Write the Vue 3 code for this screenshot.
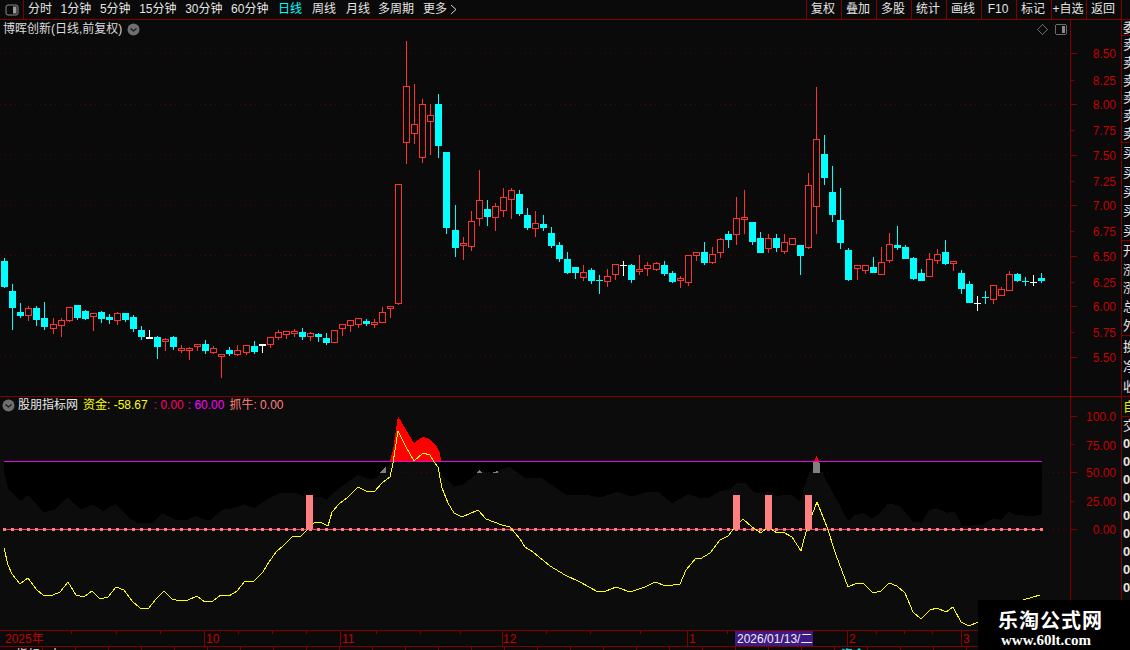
<script setup>
const raw = [
['c',258,261,286,287],['c',284,291,307,329],['c',303,312,315,317],['r',306,308,315,320],['c',306,308,319,325],
['c',302,318,326,329],['r',318,324,328,333],['r',318,320,325,336],['r',307,307,320,321],['c',305,305,317,319],
['c',310,311,318,319],['r',313,313,316,330],['c',311,312,318,322],['c',314,317,319,323],['r',312,313,320,324],
['c',313,313,319,321],['c',315,317,328,331],['c',326,330,336,339],['w',330,337,338,338],['c',336,337,346,358],
['r',338,339,341,350],['c',336,337,346,349],['r',345,348,350,352],['r',347,348,350,359],['r',344,344,346,350],
['c',340,344,350,353],['r',346,348,352,353],['r',354,354,356,377],['c',347,350,353,355],['r',345,350,354,355],
['r',345,345,352,354],['c',341,346,351,353],['w',344,344,345,352],['r',337,337,344,347],['r',330,332,337,339],
['r',331,331,334,338],['r',329,331,333,336],['c',328,332,336,339],['r',332,333,336,340],['c',333,334,336,341],
['c',333,338,342,344],['r',330,330,342,342],['r',324,324,328,335],['r',320,320,325,331],['r',318,318,324,327],
['c',319,321,323,325],['r',319,322,324,327],['r',307,312,322,322],['r',306,306,308,317],['r',184,184,303,304],
['r',41,86,142,163],['r',84,124,133,143],['r',99,104,157,162],['r',104,115,121,154],['c',94,104,145,157],
['c',152,152,227,233],['c',205,230,247,256],['r',237,243,245,259],['r',211,221,246,250],['r',170,200,218,225],
['c',200,209,216,225],['r',203,206,217,230],['r',188,197,210,216],['r',188,190,199,218],['c',190,194,213,215],
['c',208,215,227,229],['r',211,223,228,236],['c',215,224,227,230],['c',227,233,245,247],['c',242,245,258,261],
['c',252,259,272,273],['c',267,267,272,278],['r',265,272,277,280],['c',268,270,280,283],['c',275,280,280,293],
['r',269,276,281,286],['r',264,264,274,279],['w',261,265,265,275],['c',264,265,279,282],['r',255,269,271,274],
['r',262,265,268,275],['r',262,263,269,270],['c',261,265,273,275],['c',271,273,281,282],['r',276,278,280,287],
['r',255,255,282,285],['r',252,252,255,260],['c',242,252,262,264],['r',247,254,262,263],['r',238,239,252,257],
['c',231,234,239,247],['r',197,218,234,244],['r',190,217,219,233],['c',222,222,241,244],['c',232,238,252,252],
['r',234,238,248,252],['c',234,238,247,251],['r',234,242,251,253],['r',238,238,244,244],['c',245,245,255,274],
['r',173,185,247,248],['r',87,139,206,233],['c',135,154,177,184],['c',166,192,214,221],['c',188,220,242,248],
['c',248,250,279,280],['r',265,265,268,279],['r',265,265,270,273],['c',257,267,272,272],['r',247,262,274,274],
['r',233,244,260,262],['c',226,245,247,249],['c',245,247,258,258],['c',257,258,278,279],['c',269,273,280,280],
['r',253,259,276,276],['r',249,254,260,263],['c',240,252,263,264],['r',261,261,263,270],['c',270,273,288,293],
['c',281,284,302,302],['w',296,303,303,310],['c',291,297,297,303],['r',285,285,299,303],['r',287,289,295,295],
['r',271,274,290,290],['c',273,274,280,281],['c',277,281,281,285],['w',275,282,282,285],['c',273,278,280,282]
]
const candleX = (i) => Math.round(4.3 + 8.04 * i)
const candles = raw.map(([k, hi, t, b, lo], i) => {
  const x = candleX(i)
  return { id: i, k, x, t, b, wick: `M${x + 0.5} ${hi}V${t}M${x + 0.5} ${b + 1}V${lo + 1}` }
})

const pts = (a) => a.map((p) => p.join(',')).join(' ')
const hline = (y, x1, x2) => `M${x1} ${y + 0.5}H${x2}`

const mainGridYs = [53, 104, 154, 205, 255, 306, 356]
const mainGrid = mainGridYs.map((y) => hline(y, 0, 1068)).join('')
const mainLabels = [
  ['8.50', 53], ['8.25', 80], ['8.00', 104], ['7.75', 130], ['7.50', 155], ['7.25', 181],
  ['7.00', 205], ['6.75', 231], ['6.50', 256], ['6.25', 282], ['6.00', 306], ['5.75', 332], ['5.50', 357]
]
const mainTicks = mainLabels.map(([, y], i) => hline(y, 1071, i % 2 ? 1074 : 1077)).join('')

const subLabels = [['100.0', 416], ['75.00', 445], ['50.00', 472], ['25.00', 501], ['0.00', 529]]
const subTicks = [[416, 1077], [444, 1074], [472, 1077], [501, 1074], [529, 1077]].map(([y, e]) => hline(y, 1071, e)).join('')

const m12 = ([x, y]) => [+(x / 1.845).toFixed(1), +(455 + y / 3).toFixed(1)]
const m5 = ([x, y]) => [+(700 + x / 3).toFixed(1), +(440 + y / 3).toFixed(1)]
const edgeA = [[7,50],[15,100],[38,138],[52,120],[80,172],[100,165],[125,127],[150,165],[170,148],[190,168],[213,148],[240,190],[255,205],[280,205],[300,175],[325,195],[345,195],[362,183],[385,198],[410,165],[430,160],[450,148],[470,160],[490,135],[515,115],[545,113],[570,130],[590,125],[603,135],[625,100],[660,60],[680,72],[695,70],[715,35],[725,18],[805,18],[815,60],[838,95],[855,88],[885,50],[905,55],[940,35],[970,70],[1000,70],[1045,120],[1085,120],[1105,128],[1140,110],[1165,125],[1195,110],[1215,112],[1240,145],[1270,118],[1285,125]].map(m12)
const edgeB = [[0,175],[25,175],[60,153],[90,150],[110,128],[135,128],[160,155],[195,165],[205,155],[225,167],[275,165],[300,185],[325,105],[340,80],[365,95],[445,245],[465,225],[490,220],[515,235],[540,220],[565,190],[600,198],[640,245],[665,248],[685,212],[710,205],[740,218],[765,215],[785,258],[845,255],[880,235],[905,240],[925,215],[950,225],[1000,228],[1025,223]].map(m5)
const blackArea = pts([[4, 461], ...edgeA, ...edgeB, [1042, 461]])

const redArea = pts([[390,461],[393,450],[398,416],[406,430],[414,443],[418,440],[423,437],[430,439],[437,447],[440,453],[441,461]])
const grayBits = [
  pts([[380,473],[385,467],[386,467],[386,473]]),
  pts([[476,473],[479,470],[482,473]]),
  pts([[493,473],[493,472],[498,471],[498,473]]),
  pts([[813,473],[813,464],[814,461],[819,461],[820,464],[820,473]])
]
const redCap = pts([[814,461],[816.5,456],[819,461]])

const yellow = pts([[4,548],[8,565],[12,574],[20,584],[28,578],[36,589],[44,596],[53,595],[60,592],[68,582],[76,595],[84,597],[92,591],[100,599],[108,597],[116,587],[124,590],[132,601],[140,608],[148,609],[156,599],[164,591],[172,599],[180,601],[188,600],[197,596],[205,602],[213,601],[221,595],[229,596],[237,591],[245,581],[254,581],[263,572],[269,562],[276,552],[284,545],[292,537],[301,536],[306,531],[314,523],[320,522],[328,526],[332,512],[339,504],[347,498],[358,487],[366,491],[374,492],[382,483],[390,477],[393,463],[398,431],[406,447],[414,461],[423,453],[430,455],[434,462],[438,467],[442,488],[448,503],[454,513],[462,517],[478,510],[486,519],[494,522],[502,525],[510,527],[520,539],[525,547],[533,552],[550,566],[565,575],[580,582],[598,592],[606,591],[616,587],[630,592],[645,587],[655,582],[666,586],[680,584],[686,570],[696,558],[700,559],[710,553],[720,540],[728,536],[735,527],[743,519],[752,527],[761,533],[768,527],[777,533],[783,532],[792,537],[801,551],[807,528],[817,502],[827,527],[836,555],[848,587],[857,583],[864,584],[873,593],[881,591],[889,583],[897,586],[905,593],[913,612],[921,619],[930,610],[937,608],[946,612],[953,607],[961,622],[969,626],[978,622],[1000,612],[1023,600],[1040,595]])

const zeroDots = Array.from({ length: 130 }, (_, i) => candleX(i))
const pinkBars = [306, 733, 765, 805]

const timeTicks = [71,116,160,238,272,306,376,420,460,546,590,640,727,876,904,932]
  .map((x) => `M${x + 0.5} 631V634`).join('')
const timeLong = [204,340,502,687,847,961].map((x) => `M${x + 0.5} 631V646`).join('')
const timeLabels = [['2025年',5],['10',206],['11',342],['12',503],['1',689],['2',849],['3',963]]

const sideMain = [
  { h: 'sec1', rows: ['委'] },
  { h: 'sec2', rows: ['卖','卖','卖','卖','卖','卖'] },
  { h: 'sec3', rows: ['买','买','买','买','买'] },
  { h: 'sec4', rows: ['开','涨','涨','总','外'] },
  { h: 'sec5', rows: ['换','净','收'] }
]
const subSideRows = ['交','0.00','0.00','0.00','0.00','0.00','0.00','0.00','0.00','0.00','0.00']

const tabsA = ['分时','1分钟','5分钟','15分钟','30分钟','60分钟']
const tools = ['复权','叠加','多股','统计','画线','F10','标记','+自选','返回']
const footCells = Array.from({ length: 34 }, (_, i) => ({ id: i, text: i === 0 ? '指标' : i === 1 ? '十' : i === 25 ? '资金' : '', cyan: i === 25 }))
</script>

<template>
  <div class="app">
    <header class="toolbar">
      <div class="toggle">
        <svg width="14" height="12" viewBox="0 0 14 12">
          <rect x="1" y="1" width="12" height="10" rx="2" fill="none" stroke="#8a8a8a" />
          <rect x="8" y="2.5" width="3.5" height="7" fill="#9a9a9a" />
        </svg>
      </div>
      <nav class="tabs">
        <div class="tab-group a"><span v-for="t in tabsA" :key="t">{{ t }}</span></div>
        <div class="tab-group b"><span class="active">日线</span><span>周线</span><span>月线</span></div>
        <div class="tab-group c"><span>多周期</span><span>更多</span></div>
        <svg class="more" width="7" height="11" viewBox="0 0 7 11"><path d="M1 1l5 4.5L1 10" fill="none" stroke="#d8d8d8" /></svg>
      </nav>
      <div class="tools">
        <span v-for="t in tools" :key="t" class="tool">{{ t }}</span>
      </div>
    </header>

    <section class="pane main">
      <div class="plot">
        <svg class="canvas" width="1070" height="376" viewBox="0 20 1070 376">
          <path :d="mainGrid" class="grid" />
          <g v-for="c in candles" :key="c.id">
            <path :d="c.wick" :class="'w-' + c.k" />
            <rect v-if="c.k === 'r'" :x="c.x - 2.5" :y="c.t + 0.5" width="6" :height="c.b - c.t" class="hollow" />
            <rect v-else :x="c.x - 3" :y="c.t" width="7" :height="c.b - c.t + 1" :class="'f-' + c.k" />
          </g>
          <path d="M1042.5 24.5l5 5-5 5-5-5z" class="ico" />
          <rect x="1055.5" y="24.5" width="11" height="10" rx="2" class="ico" />
          <rect x="1062" y="26" width="3" height="7" fill="#8a8a8a" />
        </svg>
        <div class="title">
          <span>博晖创新(日线,前复权)</span>
          <svg width="13" height="13" viewBox="0 0 13 13" class="chev"><circle cx="6.5" cy="6.5" r="6" fill="#6f6f6f" /><path d="M3.5 5.5l3 2.5 3-2.5" fill="none" stroke="#161616" stroke-width="1.2" /></svg>
        </div>
      </div>
      <div class="axis">
        <svg class="canvas" width="50" height="376" viewBox="1071 20 50 376">
          <path :d="mainTicks" class="tick" />
          <text v-for="[v, y] in mainLabels" :key="v" x="1116" :y="y + 4.5" class="label">{{ v }}</text>
        </svg>
      </div>
      <aside class="side">
        <div v-for="s in sideMain" :key="s.h" class="sec" :class="s.h">
          <span v-for="(r, i) in s.rows" :key="i">{{ r }}</span>
        </div>
      </aside>
    </section>

    <section class="pane sub">
      <div class="plot">
        <svg class="canvas" width="1070" height="233" viewBox="0 397 1070 233">
          <polygon :points="blackArea" fill="#000" />
          <path d="M1 472.5h1M396 472.5H436M478 472.5H516M817 472.5h13M1043 472.5H1068M1043 529.5H1068" class="grid" />
          <polygon :points="redArea" fill="#ff0000" />
          <polygon v-for="(g, i) in grayBits" :key="i" :points="g" fill="#808080" />
          <polygon :points="redCap" fill="#ff0000" />
          <path d="M4 461.5H1042" class="magenta" />
          <path d="M4 529.5H1042" class="zero" />
          <rect v-for="x in zeroDots" :key="x" :x="x - 1" y="528" width="3" height="3" fill="#ff8080" />
          <polyline :points="yellow" class="yellow" />
          <rect v-for="x in pinkBars" :key="x" :x="x" y="495" width="7" height="34" fill="#ff8080" />
        </svg>
        <div class="legend">
          <svg width="13" height="13" viewBox="0 0 13 13" class="chev"><circle cx="6.5" cy="6.5" r="6" fill="#6f6f6f" /><path d="M3.5 5.5l3 2.5 3-2.5" fill="none" stroke="#161616" stroke-width="1.2" /></svg>
          <span class="l-name">股朋指标网</span>
          <span class="l-yellow">资金: -58.67</span>
          <span class="l-pink">: 0.00</span>
          <span class="l-mag">: 60.00</span>
          <span class="l-salmon">抓牛: 0.00</span>
        </div>
      </div>
      <div class="axis">
        <svg class="canvas" width="50" height="233" viewBox="1071 397 50 233">
          <path :d="subTicks" class="tick" />
          <text v-for="[v, y] in subLabels" :key="v" x="1116" :y="y + 4.5" class="label">{{ v }}</text>
        </svg>
      </div>
      <aside class="side">
        <div class="self">自</div>
        <span v-for="(r, i) in subSideRows" :key="i" class="sub-row" :class="{ num: i > 0 }">{{ r }}</span>
      </aside>
    </section>

    <div class="timeline">
      <svg class="canvas" width="1130" height="15" viewBox="0 631 1130 15">
        <path :d="timeTicks" class="tick" />
        <path :d="timeLong" class="tick" />
        <text v-for="[t, x] in timeLabels" :key="t" :x="x" y="643" class="label start">{{ t }}</text>
        <rect x="735" y="631" width="78" height="15" fill="#3f1a84" />
        <text x="737" y="643" class="date">2026/01/13/二</text>
      </svg>
    </div>

    <footer class="foot">
      <span v-for="c in footCells" :key="c.id" class="foot-cell" :class="{ cyan: c.cyan }">{{ c.text }}</span>
    </footer>

    <div class="mark">
      <div class="mark-cn">乐淘公式网</div>
      <div class="mark-en">www.60lt.com</div>
    </div>
  </div>
</template>

<style>
html, body { margin: 0; background: #0a0a0a; }
</style>

<style scoped>
.app {
  position: relative;
  width: 1130px;
  height: 650px;
  overflow: hidden;
  display: flex;
  flex-direction: column;
  background: #0a0a0a;
  color: #e4e4e4;
  font: 12px/19px "Liberation Sans", "Noto Sans CJK SC", sans-serif;
}
.toolbar {
  flex: 0 0 20px;
  box-sizing: border-box;
  display: flex;
  border-bottom: 1px solid #800000;
}
.toggle {
  flex: 0 0 24px;
  box-sizing: border-box;
  display: flex;
  align-items: center;
  justify-content: center;
  border-right: 1px solid #800000;
}
.tabs { display: flex; flex: 1; align-items: center; padding-left: 4px; }
.tab-group { display: flex; }
.tab-group.a { gap: 8.6px; }
.tab-group.b { gap: 10px; margin-left: 9.6px; }
.tab-group.c { gap: 9px; margin-left: 8px; }
.active { color: #00ffff; }
.more { margin-left: 3px; }
.tools { display: flex; margin-right: 8px; }
.tool {
  flex: 0 0 35px;
  box-sizing: border-box;
  text-align: center;
  border-left: 1px solid #800000;
  padding-right: 2px;
}
.tool:last-child { flex-basis: 36px; border-right: 1px solid #800000; }

.pane { display: flex; box-sizing: border-box; border-bottom: 1px solid #800000; }
.pane.main { flex: 0 0 377px; }
.pane.sub { flex: 0 0 234px; background: #0c0c0c; }
.plot { position: relative; flex: 0 0 1070px; }
.canvas { display: block; shape-rendering: crispEdges; }
.axis {
  flex: 0 0 52px;
  box-sizing: border-box;
  border-left: 1px solid #800000;
  border-right: 1px solid #800000;
}
.side { flex: 0 0 8px; overflow: hidden; display: flex; flex-direction: column; }

.grid { fill: none; stroke: #500000; stroke-dasharray: 1 4; }
.tick { fill: none; stroke: #800000; }
.label {
  fill: #c40000;
  text-anchor: end;
  font: 12px "Liberation Sans", "Noto Sans CJK SC", sans-serif;
  shape-rendering: auto;
}
.label.start { text-anchor: start; }
.date { fill: #f0f0f0; font: 12px "Liberation Sans", "Noto Sans CJK SC", sans-serif; }

.w-c { stroke: #00ffff; fill: none; }
.w-r { stroke: #ff3232; fill: none; }
.w-w { stroke: #ffffff; fill: none; }
.f-c { fill: #00ffff; }
.f-w { fill: #ffffff; }
.hollow { fill: #0a0a0a; stroke: #ff3232; }
.ico { fill: none; stroke: #6c6c6c; }

.magenta { stroke: #e800e8; fill: none; }
.zero { stroke: #ff3c78; fill: none; }
.yellow { stroke: #ffff00; fill: none; }

.title {
  position: absolute;
  left: 3px;
  top: 0;
  display: flex;
  align-items: center;
  gap: 5px;
  height: 18px;
  color: #dcdcdc;
}
.legend {
  position: absolute;
  left: 2px;
  top: 0;
  display: flex;
  align-items: center;
  gap: 6px;
  height: 17px;
  white-space: nowrap;
}
.chev { shape-rendering: auto; flex: none; }
.legend .chev { margin-right: -3px; }
.l-name { color: #e8e8e8; margin-right: -1px; }
.l-yellow { color: #ffff00; }
.l-pink { color: #ff0070; }
.l-mag { color: #ff00ff; margin-left: -2px; }
.l-salmon { color: #ff8080; margin-left: -1px; }

.sec {
  box-sizing: border-box;
  display: flex;
  flex-direction: column;
  justify-content: space-around;
  border-bottom: 1px solid #800000;
  padding-left: 1px;
  line-height: 17px;
  white-space: nowrap;
  font-size: 13px;
}
.sec1 { flex: 0 0 16px; line-height: 15px; }
.sec2 { flex: 0 0 107px; }
.sec3 { flex: 0 0 98px; }
.sec4 { flex: 0 0 95px; }
.sec5 { flex: 0 0 60px; border-bottom: none; }
.self {
  flex: 0 0 19px;
  box-sizing: border-box;
  border-bottom: 1px solid #800000;
  color: #e8e800;
  font-size: 13px;
  padding-left: 1px;
  white-space: nowrap;
}
.sub-row { flex: 0 0 18px; padding-left: 1px; white-space: nowrap; font-size: 13px; line-height: 18px; }
.sub-row.num { font-weight: 700; }

.timeline { flex: 0 0 16px; box-sizing: border-box; border-bottom: 1px solid #800000; }

.foot { flex: 0 0 3px; display: flex; overflow: hidden; padding-left: 10px; }
.foot-cell {
  flex: 0 0 33px;
  box-sizing: border-box;
  height: 3px;
  border-right: 1px solid #800000;
  line-height: 16px;
  padding-left: 6px;
  color: #e8e8e8;
  white-space: nowrap;
  overflow: hidden;
}
.foot-cell.cyan { color: #00ffff; }

.mark {
  position: absolute;
  left: 978px;
  top: 600px;
  width: 152px;
  height: 50px;
  background: #000;
  color: #fff;
  display: flex;
  flex-direction: column;
  align-items: center;
  font-weight: 700;
}
.mark-cn {
  font: 700 20px/24px "Noto Sans CJK SC", sans-serif;
  letter-spacing: 1px;
  margin-top: 8px;
  padding-right: 7px;
}
.mark-en {
  font: 700 15px/17px "Liberation Serif", serif;
  padding-right: 16px;
}
</style>
